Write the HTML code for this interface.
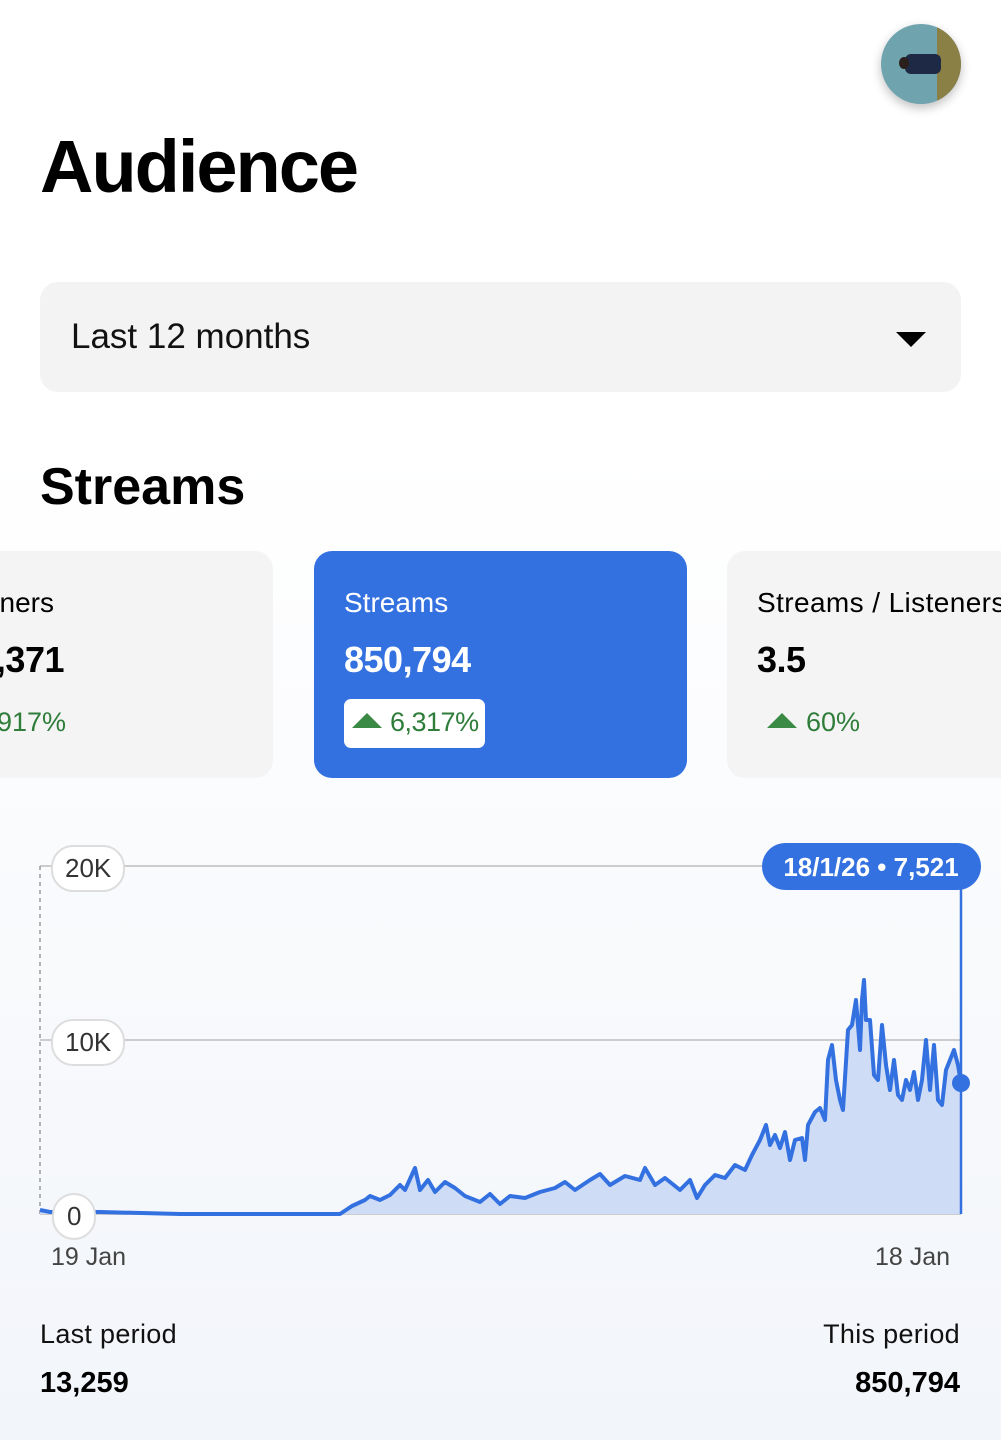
<!DOCTYPE html>
<html><head><meta charset="utf-8"><style>
*{margin:0;padding:0;box-sizing:border-box}
html,body{width:1001px;height:1440px;overflow:hidden}
body{font-family:"Liberation Sans",sans-serif;background:linear-gradient(#fff 0,#fff 440px,#f2f5fa 1440px);position:relative;color:#000}
.abs{position:absolute}
.card{position:absolute;top:551px;height:227px;border-radius:18px;background:#f4f4f4;overflow:hidden}
.lbl{position:absolute;font-size:28px;top:36px;white-space:nowrap}
.val{position:absolute;font-size:36px;font-weight:bold;top:88px;letter-spacing:-0.5px;white-space:nowrap}
.pct{position:absolute;font-size:27px;color:#2f7d3a;top:156px;white-space:nowrap}
.tri{display:inline-block;width:0;height:0;border-left:15px solid transparent;border-right:15px solid transparent;border-bottom:15px solid #3a8a45;margin-right:9px;vertical-align:3px}
.pill{position:absolute;background:#fff;border:2px solid #ddd;border-radius:22px;font-size:26px;color:#333;padding:6px 12px}
</style></head><body>
<div class="abs" style="left:881px;top:24px;width:80px;height:80px;border-radius:50%;background:#6fa3ae;overflow:hidden;box-shadow:0 4px 10px rgba(0,0,0,.25)">
 <div class="abs" style="left:56px;top:0;width:26px;height:80px;background:#8a8046"></div>
 <div class="abs" style="left:24px;top:30px;width:36px;height:20px;background:#1e2a45;border-radius:6px"></div>
 <div class="abs" style="left:18px;top:33px;width:10px;height:12px;background:#2a1f1a;border-radius:50%"></div>
</div>
<div class="abs" style="left:40px;top:124px;font-size:74px;font-weight:bold;letter-spacing:-2px">Audience</div>
<div class="abs" style="left:40px;top:282px;width:921px;height:110px;border-radius:18px;background:#f3f3f3"></div>
<div class="abs" style="left:71px;top:317px;font-size:35px;color:#111">Last 12 months</div>
<div class="abs" style="left:896px;top:332px;width:0;height:0;border-left:15px solid transparent;border-right:15px solid transparent;border-top:15px solid #000"></div>
<div class="abs" style="left:40px;top:457px;font-size:52px;font-weight:bold;letter-spacing:0">Streams</div>

<div class="card" style="left:-100px;width:373px">
 <div class="lbl" style="right:219px">Listeners</div>
 <div class="val" style="right:209px">4,371</div>
 <div class="pct" style="right:207px">4,917%</div>
</div>
<div class="card" style="left:314px;width:373px;background:#3471e0">
 <div class="lbl" style="left:30px;color:#fff">Streams</div>
 <div class="val" style="left:30px;color:#fff">850,794</div>
 <div class="abs" style="left:30px;top:148px;width:141px;height:49px;background:#fff;border-radius:7px"></div>
 <div class="pct" style="left:38px;letter-spacing:-0.5px"><span class="tri" style="margin-right:8px"></span>6,317%</div>
</div>
<div class="card" style="left:727px;width:274px;border-radius:18px 0 0 18px">
 <div class="lbl" style="left:30px;letter-spacing:0.4px">Streams / Listeners</div>
 <div class="val" style="left:30px">3.5</div>
 <div class="pct" style="left:40px"><span class="tri"></span>60%</div>
</div>

<svg class="abs" style="left:0;top:0" width="1001" height="1440">
 <line x1="40" y1="866" x2="961" y2="866" stroke="#ccc" stroke-width="2"/>
 <line x1="40" y1="1040" x2="961" y2="1040" stroke="#ccc" stroke-width="2"/>
 <line x1="40" y1="1214" x2="961" y2="1214" stroke="#ccc" stroke-width="2"/>
 <line x1="40" y1="866" x2="40" y2="1214" stroke="#999" stroke-width="1.5" stroke-dasharray="4 4"/>
 <path fill="#cfdcf5" d="M40,1210 L50,1212 L100,1212 L180,1214 L340,1214 L352,1206 L365,1200 L370,1196 L380,1200 L390,1195 L400,1185 L405,1190 L415,1168 L420,1190 L428,1180 L435,1192 L445,1182 L455,1188 L465,1196 L480,1202 L490,1194 L500,1204 L510,1196 L525,1198 L540,1192 L555,1188 L565,1182 L575,1190 L590,1180 L600,1174 L610,1185 L625,1176 L640,1180 L645,1168 L655,1185 L665,1178 L680,1190 L690,1180 L697,1198 L705,1185 L715,1175 L725,1178 L735,1165 L745,1170 L752,1155 L760,1140 L766,1125 L770,1145 L775,1135 L780,1148 L785,1132 L790,1160 L795,1140 L802,1138 L805,1160 L808,1125 L815,1112 L820,1108 L825,1120 L828,1060 L832,1045 L836,1080 L840,1100 L843,1110 L848,1030 L852,1025 L856,1000 L860,1050 L862,1000 L864,980 L866,1020 L870,1020 L874,1075 L878,1080 L882,1025 L886,1065 L890,1090 L894,1060 L898,1095 L902,1100 L906,1080 L910,1090 L914,1072 L918,1100 L922,1080 L926,1040 L930,1090 L934,1045 L938,1100 L942,1105 L946,1070 L950,1060 L954,1050 L958,1065 L961,1083 L961,1214 L40,1214 Z"/>
 <polyline fill="none" stroke="#3471e0" stroke-width="4" stroke-linejoin="round" points="40,1210 50,1212 100,1212 180,1214 340,1214 352,1206 365,1200 370,1196 380,1200 390,1195 400,1185 405,1190 415,1168 420,1190 428,1180 435,1192 445,1182 455,1188 465,1196 480,1202 490,1194 500,1204 510,1196 525,1198 540,1192 555,1188 565,1182 575,1190 590,1180 600,1174 610,1185 625,1176 640,1180 645,1168 655,1185 665,1178 680,1190 690,1180 697,1198 705,1185 715,1175 725,1178 735,1165 745,1170 752,1155 760,1140 766,1125 770,1145 775,1135 780,1148 785,1132 790,1160 795,1140 802,1138 805,1160 808,1125 815,1112 820,1108 825,1120 828,1060 832,1045 836,1080 840,1100 843,1110 848,1030 852,1025 856,1000 860,1050 862,1000 864,980 866,1020 870,1020 874,1075 878,1080 882,1025 886,1065 890,1090 894,1060 898,1095 902,1100 906,1080 910,1090 914,1072 918,1100 922,1080 926,1040 930,1090 934,1045 938,1100 942,1105 946,1070 950,1060 954,1050 958,1065 961,1083"/>
 <line x1="961" y1="880" x2="961" y2="1214" stroke="#3471e0" stroke-width="2.5"/>
 <circle cx="961" cy="1083" r="9" fill="#3471e0"/>
 <rect x="762" y="843" width="219" height="47" rx="23.5" fill="#3471e0"/>
 <text x="871" y="876" text-anchor="middle" font-family="Liberation Sans" font-weight="bold" font-size="26" fill="#fff">18/1/26 • 7,521</text>
</svg>
<div class="pill" style="left:51px;top:845px">20K</div>
<div class="pill" style="left:51px;top:1019px">10K</div>
<div class="pill" style="left:52px;top:1193px;padding:6px 13px">0</div>
<div class="abs" style="left:51px;top:1243px;font-size:25px;color:#444">19 Jan</div>
<div class="abs" style="left:875px;top:1243px;font-size:25px;color:#444">18 Jan</div>
<div class="abs" style="left:40px;top:1319px;font-size:27px;color:#111;letter-spacing:0.3px">Last period</div>
<div class="abs" style="left:40px;top:1367px;font-size:29px;font-weight:bold">13,259</div>
<div class="abs" style="right:41px;top:1319px;font-size:27px;color:#111;letter-spacing:0.3px">This period</div>
<div class="abs" style="right:41px;top:1367px;font-size:29px;font-weight:bold">850,794</div>
</body></html>
